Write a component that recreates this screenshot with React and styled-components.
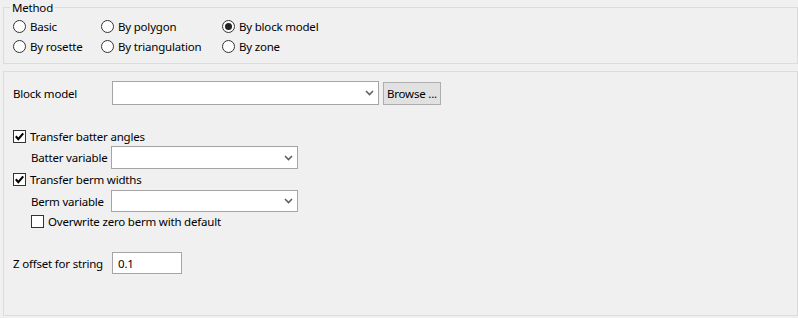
import React from "react"
import styled, { createGlobalStyle } from "styled-components"

const GlobalStyle = createGlobalStyle`
  html, body {
    margin: 0;
    padding: 0;
    background: #f0f0f0;
  }
  body {
    font-family: "Noto Sans", "Open Sans", sans-serif;
    font-size: 11.5px;
    letter-spacing: -0.2px;
    color: #000;
  }
`;

const Page = styled.div`
  width: 798px;
  height: 318px;
  box-sizing: border-box;
  padding: 0 0 2px 3px;
  display: flex;
  flex-direction: column;
`;

const Group = styled.fieldset`
  margin: 0;
  padding: 1px 9px 7px 9px;
  border: 1px solid #dcdcdc;
  min-width: 0;
`;

const Legend = styled.legend`
  margin-left: -3px;
  padding: 0 2px;
  line-height: 15px;
`;

const RadioGrid = styled.div`
  display: grid;
  grid-template-columns: 88px 121px auto;
  grid-auto-rows: 20px;
  align-items: center;
`;

const Option = styled.label`
  display: flex;
  align-items: center;
  gap: 4px;
  white-space: nowrap;
`;

const RadioDot = styled.span`
  width: 13px;
  height: 13px;
  box-sizing: border-box;
  border: 1px solid #333;
  border-radius: 50%;
  background: #fff;
  display: flex;
  align-items: center;
  justify-content: center;
  flex: none;
  &::after {
    content: "";
    width: 7px;
    height: 7px;
    border-radius: 50%;
    background: ${p => (p.$checked ? "#222" : "transparent")};
  }
`;

const Box = styled.span`
  width: 13px;
  height: 13px;
  box-sizing: border-box;
  border: 1px solid #333;
  background: #fff;
  display: flex;
  align-items: center;
  justify-content: center;
  flex: none;
`;

const Panel = styled.div`
  flex: 1;
  margin-top: 7px;
  border: 1px solid #dcdcdc;
  padding: 9px 9px 0 9px;
  display: flex;
  flex-direction: column;
`;

const Row = styled.div`
  display: flex;
  align-items: center;
  margin-top: ${p => p.$top || 0}px;
  padding-left: ${p => p.$indent || 0}px;
  height: ${p => p.$h || 16}px;
`;

const Label = styled.span`
  width: ${p => p.$w}px;
  flex: none;
  white-space: nowrap;
`;

const Combo = styled.div`
  width: ${p => p.$w}px;
  height: ${p => p.$h}px;
  box-sizing: border-box;
  border: 1px solid #a5a5a5;
  background: #fff;
  display: flex;
  align-items: center;
  justify-content: flex-end;
  padding-right: 4px;
`;

const Button = styled.button`
  margin-left: 4px;
  height: 23px;
  width: 58px;
  box-sizing: border-box;
  border: 1px solid #adadad;
  background: #e1e1e1;
  font: inherit;
  letter-spacing: inherit;
  color: #000;
  padding: 0;
`;

const TextInput = styled.div`
  width: 70px;
  height: 22px;
  box-sizing: border-box;
  border: 1px solid #a5a5a5;
  background: #fff;
  display: flex;
  align-items: center;
  padding-left: 5px;
`;

const Chevron = () => (
  <svg width="9" height="6" viewBox="0 0 9 6">
    <path d="M1 1 L4.5 4.5 L8 1" fill="none" stroke="#606060" strokeWidth="1.6" />
  </svg>
);

const Check = () => (
  <svg width="11" height="11" viewBox="0 0 11 11">
    <path d="M1.8 5.3 L4.3 8.2 L9.2 2.3" fill="none" stroke="#000" strokeWidth="2.1" />
  </svg>
);

const Radio = ({ checked, children }) => (
  <Option>
    <RadioDot $checked={checked} />
    {children}
  </Option>
);

const CheckOption = ({ checked, children }) => (
  <Option>
    <Box>{checked && <Check />}</Box>
    {children}
  </Option>
);

const methods = [
  ["Basic", false],
  ["By polygon", false],
  ["By block model", true],
  ["By rosette", false],
  ["By triangulation", false],
  ["By zone", false],
];

export default function App() {
  return (
    <>
      <GlobalStyle />
      <Page>
        <Group>
          <Legend>Method</Legend>
          <RadioGrid>
            {methods.map(([name, on]) => (
              <Radio key={name} checked={on}>{name}</Radio>
            ))}
          </RadioGrid>
        </Group>
        <Panel>
          <Row $h={24}>
            <Label $w={99}>Block model</Label>
            <Combo $w={267} $h={24}><Chevron /></Combo>
            <Button>Browse ...</Button>
          </Row>
          <Row $top={23}>
            <CheckOption checked>Transfer batter angles</CheckOption>
          </Row>
          <Row $top={2} $h={23} $indent={18}>
            <Label $w={80}>Batter variable</Label>
            <Combo $w={187} $h={23}><Chevron /></Combo>
          </Row>
          <Row $top={2}>
            <CheckOption checked>Transfer berm widths</CheckOption>
          </Row>
          <Row $top={3} $h={22} $indent={18}>
            <Label $w={80}>Berm variable</Label>
            <Combo $w={187} $h={22}><Chevron /></Combo>
          </Row>
          <Row $top={1} $indent={18}>
            <CheckOption>Overwrite zero berm with default</CheckOption>
          </Row>
          <Row $top={23} $h={22}>
            <Label $w={99}>Z offset for string</Label>
            <TextInput>0.1</TextInput>
          </Row>
        </Panel>
      </Page>
    </>
  )
}
